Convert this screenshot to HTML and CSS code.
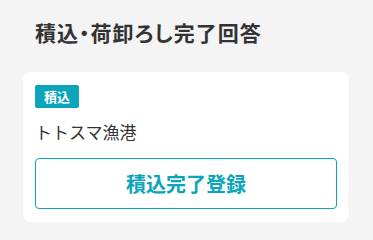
FILE: index.html
```html
<!DOCTYPE html>
<html lang="ja">
<head>
<meta charset="utf-8">
<link rel="stylesheet" href="styles.css">
</head>
<body>
<div class="page">
  <h1 class="title">積込・荷卸ろし完了回答</h1>
  <div class="card">
    <span class="badge">積込</span>
    <div class="place">トトスマ漁港</div>
    <button class="btn">積込完了登録</button>
  </div>
</div>
</body>
</html>
```
FILE: styles.css
```css
html, body {
  margin: 0;
  padding: 0;
  background: #f4f4f4;
}
body {
  font-family: "Noto Sans CJK JP", "Noto Sans", sans-serif;
  color: #333;
}
.page {
  padding: 17px 23px 0 23px;
}
.title {
  margin: 0 0 0 12px;
  font-size: 21px;
  line-height: 30px;
  font-weight: 700;
  letter-spacing: 1px;
  font-feature-settings: "palt";
  color: #333;
}
.card {
  margin-top: 25px;
  width: 326px;
  box-sizing: border-box;
  background: #fff;
  border-radius: 8px;
  padding: 13px 12px 13px 12px;
  display: flex;
  flex-direction: column;
  align-items: flex-start;
}
.badge {
  display: inline-block;
  background: #0aa5bb;
  color: #fff;
  font-size: 13px;
  font-weight: 700;
  line-height: 15px;
  padding: 4px 9px;
  border-radius: 2px;
}
.place {
  margin-top: 11px;
  font-size: 17px;
  line-height: 25px;
  color: #333;
}
.btn {
  margin-top: 14px;
  width: 100%;
  height: 51px;
  background: #fff;
  border: 1px solid #0aa5bb;
  border-radius: 4px;
  color: #0aa5bb;
  font-family: "Noto Sans CJK JP", "Noto Sans", sans-serif;
  font-size: 20px;
  font-weight: 700;
  padding: 0;
}
```
